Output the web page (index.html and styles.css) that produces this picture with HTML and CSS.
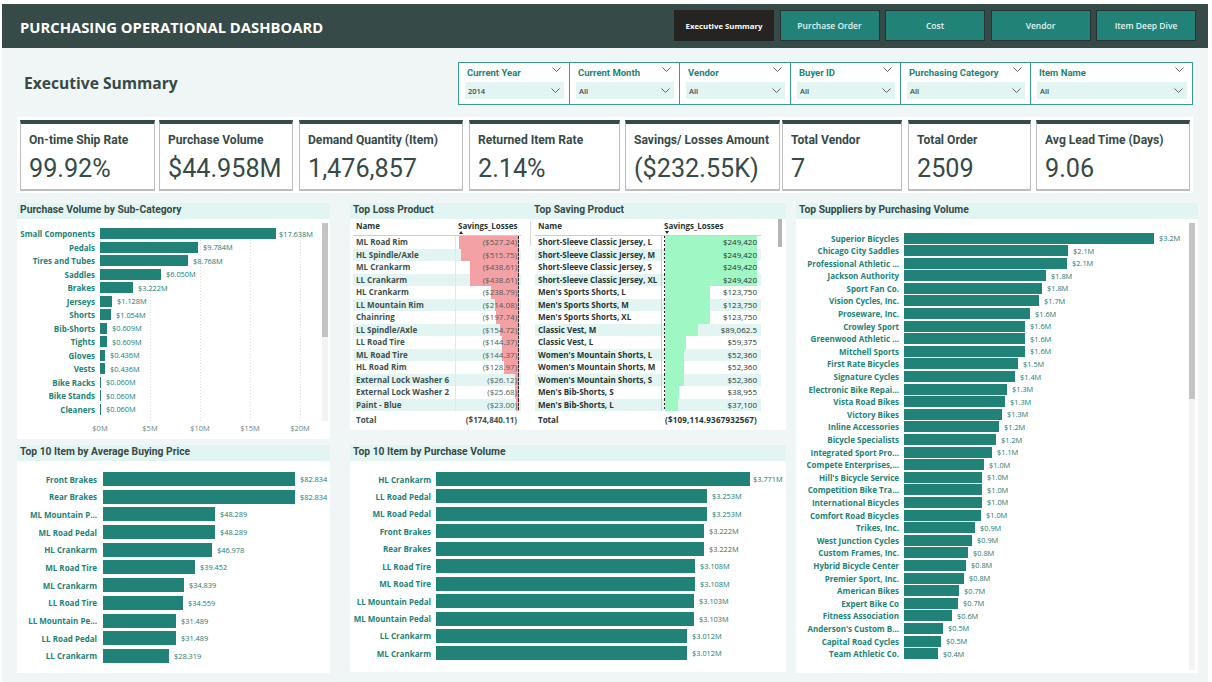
FILE: index.html
```html
<!DOCTYPE html>
<html lang="en">
<head>
    <meta charset="UTF-8">
    <title>Purchasing Operational Dashboard</title>
    <link rel="stylesheet" href="styles.css">
</head>
<body>
    <svg width="0" height="0" class="defs">
        <symbol id="chev" viewBox="0 0 9 5"><path d="M.5.5l4 4 4-4" fill="none" stroke="#4a5654" stroke-width=".9"/></symbol>
    </svg>
    <div class="report">
        <header class="topbar">
            <h1>PURCHASING OPERATIONAL DASHBOARD</h1>
            <nav class="tabs">
                <a class="tab active">Executive Summary</a>
                <a class="tab">Purchase Order</a>
                <a class="tab">Cost</a>
                <a class="tab">Vendor</a>
                <a class="tab">Item Deep Dive</a>
            </nav>
        </header>

        <!-- Slicers -->
        <section class="toolbar">
            <h2>Executive Summary</h2>
            <div class="slicers">
                <div class="slicer w-year">
                    <div class="slicer-head"><span>Current Year</span><svg class="chev"><use href="#chev"/></svg></div>
                    <div class="slicer-box"><span>2014</span><svg class="chev"><use href="#chev"/></svg></div>
                </div>
                <div class="slicer w-month">
                    <div class="slicer-head"><span>Current Month</span><svg class="chev"><use href="#chev"/></svg></div>
                    <div class="slicer-box"><span>All</span><svg class="chev"><use href="#chev"/></svg></div>
                </div>
                <div class="slicer w-vendor">
                    <div class="slicer-head"><span>Vendor</span><svg class="chev"><use href="#chev"/></svg></div>
                    <div class="slicer-box"><span>All</span><svg class="chev"><use href="#chev"/></svg></div>
                </div>
                <div class="slicer w-buyer">
                    <div class="slicer-head"><span>Buyer ID</span><svg class="chev"><use href="#chev"/></svg></div>
                    <div class="slicer-box"><span>All</span><svg class="chev"><use href="#chev"/></svg></div>
                </div>
                <div class="slicer w-cat">
                    <div class="slicer-head"><span>Purchasing Category</span><svg class="chev"><use href="#chev"/></svg></div>
                    <div class="slicer-box"><span>All</span><svg class="chev"><use href="#chev"/></svg></div>
                </div>
                <div class="slicer w-item">
                    <div class="slicer-head"><span>Item Name</span><svg class="chev"><use href="#chev"/></svg></div>
                    <div class="slicer-box"><span>All</span><svg class="chev"><use href="#chev"/></svg></div>
                </div>
            </div>
        </section>

        <!-- KPI cards -->
        <section class="kpis">
            <div class="kpi k1"><div class="kpi-title">On-time Ship Rate</div><div class="kpi-value">99.92%</div></div>
            <div class="kpi k2"><div class="kpi-title">Purchase Volume</div><div class="kpi-value">$44.958M</div></div>
            <div class="kpi k3"><div class="kpi-title">Demand Quantity (Item)</div><div class="kpi-value">1,476,857</div></div>
            <div class="kpi k4"><div class="kpi-title">Returned Item Rate</div><div class="kpi-value">2.14%</div></div>
            <div class="kpi k5"><div class="kpi-title">Savings/ Losses Amount</div><div class="kpi-value">($232.55K)</div></div>
            <div class="kpi k6"><div class="kpi-title">Total Vendor</div><div class="kpi-value">7</div></div>
            <div class="kpi k7"><div class="kpi-title">Total Order</div><div class="kpi-value">2509</div></div>
            <div class="kpi k8"><div class="kpi-title">Avg Lead Time (Days)</div><div class="kpi-value">9.06</div></div>
        </section>

        <main class="grid">
            <div class="col col-left">
                <section class="panel subcat">
                    <h3 class="band">Purchase Volume by Sub-Category</h3>
                    <div class="panel-body">
                        <div class="chart-wrap">
                            <div class="bars bars-sub">
                                <div class="row"><span class="lbl">Small Components</span><i class="bar" style="width:176px"></i><span class="val tight">$17.638M</span></div>
                                <div class="row"><span class="lbl">Pedals</span><i class="bar" style="width:98px"></i><span class="val">$9.784M</span></div>
                                <div class="row"><span class="lbl">Tires and Tubes</span><i class="bar" style="width:88px"></i><span class="val">$8.768M</span></div>
                                <div class="row"><span class="lbl">Saddles</span><i class="bar" style="width:61px"></i><span class="val">$6.050M</span></div>
                                <div class="row"><span class="lbl">Brakes</span><i class="bar" style="width:33px"></i><span class="val">$3.222M</span></div>
                                <div class="row"><span class="lbl">Jerseys</span><i class="bar" style="width:12px"></i><span class="val">$1.128M</span></div>
                                <div class="row"><span class="lbl">Shorts</span><i class="bar" style="width:11px"></i><span class="val">$1.054M</span></div>
                                <div class="row"><span class="lbl">Bib-Shorts</span><i class="bar" style="width:7px"></i><span class="val">$0.609M</span></div>
                                <div class="row"><span class="lbl">Tights</span><i class="bar" style="width:7px"></i><span class="val">$0.609M</span></div>
                                <div class="row"><span class="lbl">Gloves</span><i class="bar" style="width:5px"></i><span class="val">$0.436M</span></div>
                                <div class="row"><span class="lbl">Vests</span><i class="bar" style="width:5px"></i><span class="val">$0.436M</span></div>
                                <div class="row"><span class="lbl">Bike Racks</span><i class="bar" style="width:1px"></i><span class="val">$0.060M</span></div>
                                <div class="row"><span class="lbl">Bike Stands</span><i class="bar" style="width:1px"></i><span class="val">$0.060M</span></div>
                                <div class="row"><span class="lbl">Cleaners</span><i class="bar" style="width:1px"></i><span class="val">$0.060M</span></div>
                            </div>
                            <div class="axis">
                                <span>$0M</span><span>$5M</span><span>$10M</span><span>$15M</span><span>$20M</span>
                            </div>
                        </div>
                        <div class="scrollbar sb-sub"><div class="thumb"></div></div>
                    </div>
                </section>
                <section class="panel avgprice">
                    <h3 class="band">Top 10 Item by Average Buying Price</h3>
                    <div class="bars bars-price">
                        <div class="row"><span class="lbl">Front Brakes</span><i class="bar" style="width:192px"></i><span class="val">$82.834</span></div>
                        <div class="row"><span class="lbl">Rear Brakes</span><i class="bar" style="width:192px"></i><span class="val">$82.834</span></div>
                        <div class="row"><span class="lbl">ML Mountain P...</span><i class="bar" style="width:112px"></i><span class="val">$48.289</span></div>
                        <div class="row"><span class="lbl">ML Road Pedal</span><i class="bar" style="width:112px"></i><span class="val">$48.289</span></div>
                        <div class="row"><span class="lbl">HL Crankarm</span><i class="bar" style="width:109px"></i><span class="val">$46.978</span></div>
                        <div class="row"><span class="lbl">ML Road Tire</span><i class="bar" style="width:92px"></i><span class="val">$39.452</span></div>
                        <div class="row"><span class="lbl">ML Crankarm</span><i class="bar" style="width:81px"></i><span class="val">$34.839</span></div>
                        <div class="row"><span class="lbl">LL Road Tire</span><i class="bar" style="width:80px"></i><span class="val">$34.559</span></div>
                        <div class="row"><span class="lbl">LL Mountain Pe...</span><i class="bar" style="width:73px"></i><span class="val">$31.489</span></div>
                        <div class="row"><span class="lbl">LL Road Pedal</span><i class="bar" style="width:73px"></i><span class="val">$31.489</span></div>
                        <div class="row"><span class="lbl">LL Crankarm</span><i class="bar" style="width:66px"></i><span class="val">$28.319</span></div>
                    </div>
                </section>
            </div>

            <div class="col col-mid">
                <section class="panel tables">
                    <div class="band band-split"><h3>Top Loss Product</h3><h3>Top Saving Product</h3></div>
                    <div class="tables-body">
                        <div class="tbl tbl-loss">
                            <div class="tbl-head"><span>Name</span><span class="sort">Savings_Losses<b class="tri up"></b></span></div>
                            <div class="tbl-row"><span>ML Road Rim</span><span class="num" style="--w:60px">($527.24)</span></div>
                            <div class="tbl-row"><span>HL Spindle/Axle</span><span class="num" style="--w:58px">($515.75)</span></div>
                            <div class="tbl-row"><span>ML Crankarm</span><span class="num" style="--w:49px">($438.61)</span></div>
                            <div class="tbl-row"><span>LL Crankarm</span><span class="num" style="--w:49px">($438.61)</span></div>
                            <div class="tbl-row"><span>HL Crankarm</span><span class="num" style="--w:28px">($238.79)</span></div>
                            <div class="tbl-row"><span>LL Mountain Rim</span><span class="num" style="--w:24px">($214.08)</span></div>
                            <div class="tbl-row"><span>Chainring</span><span class="num" style="--w:23px">($197.74)</span></div>
                            <div class="tbl-row"><span>LL Spindle/Axle</span><span class="num" style="--w:19px">($154.72)</span></div>
                            <div class="tbl-row"><span>LL Road Tire</span><span class="num" style="--w:17px">($144.37)</span></div>
                            <div class="tbl-row"><span>ML Road Tire</span><span class="num" style="--w:17px">($144.37)</span></div>
                            <div class="tbl-row"><span>HL Road Rim</span><span class="num" style="--w:15px">($128.97)</span></div>
                            <div class="tbl-row"><span>External Lock Washer 6</span><span class="num" style="--w:4px">($26.12)</span></div>
                            <div class="tbl-row"><span>External Lock Washer 2</span><span class="num" style="--w:4px">($25.68)</span></div>
                            <div class="tbl-row"><span>Paint - Blue</span><span class="num" style="--w:3px">($23.00)</span></div>
                            <div class="tbl-total"><span>Total</span><span>($174,840.11)</span></div>
                        </div>
                        <div class="scrollbar sb-loss"></div>
                        <div class="tbl tbl-save">
                            <div class="tbl-head"><span>Name</span><span class="sort">Savings_Losses<b class="tri down"></b></span></div>
                            <div class="tbl-row"><span>Short-Sleeve Classic Jersey, L</span><span class="num" style="--w:92px">$249,420</span></div>
                            <div class="tbl-row"><span>Short-Sleeve Classic Jersey, M</span><span class="num" style="--w:92px">$249,420</span></div>
                            <div class="tbl-row"><span>Short-Sleeve Classic Jersey, S</span><span class="num" style="--w:92px">$249,420</span></div>
                            <div class="tbl-row"><span>Short-Sleeve Classic Jersey, XL</span><span class="num" style="--w:92px">$249,420</span></div>
                            <div class="tbl-row"><span>Men's Sports Shorts, L</span><span class="num" style="--w:45px">$123,750</span></div>
                            <div class="tbl-row"><span>Men's Sports Shorts, M</span><span class="num" style="--w:45px">$123,750</span></div>
                            <div class="tbl-row"><span>Men's Sports Shorts, XL</span><span class="num" style="--w:45px">$123,750</span></div>
                            <div class="tbl-row"><span>Classic Vest, M</span><span class="num" style="--w:33px">$89,062.5</span></div>
                            <div class="tbl-row"><span>Classic Vest, L</span><span class="num" style="--w:21px">$59,375</span></div>
                            <div class="tbl-row"><span>Women's Mountain Shorts, L</span><span class="num" style="--w:19px">$52,360</span></div>
                            <div class="tbl-row"><span>Women's Mountain Shorts, M</span><span class="num" style="--w:19px">$52,360</span></div>
                            <div class="tbl-row"><span>Women's Mountain Shorts, S</span><span class="num" style="--w:19px">$52,360</span></div>
                            <div class="tbl-row"><span>Men's Bib-Shorts, S</span><span class="num" style="--w:14px">$38,955</span></div>
                            <div class="tbl-row"><span>Men's Bib-Shorts, L</span><span class="num" style="--w:13px">$37,100</span></div>
                            <div class="tbl-total"><span>Total</span><span>($109,114.9367932567)</span></div>
                        </div>
                        <div class="scrollbar sb-save"></div>
                    </div>
                </section>
                <section class="panel topvolume">
                    <h3 class="band">Top 10 Item by Purchase Volume</h3>
                    <div class="bars bars-volume">
                        <div class="row"><span class="lbl">HL Crankarm</span><i class="bar" style="width:314px"></i><span class="val tight">$3.771M</span></div>
                        <div class="row"><span class="lbl">LL Road Pedal</span><i class="bar" style="width:271px"></i><span class="val">$3.253M</span></div>
                        <div class="row"><span class="lbl">ML Road Pedal</span><i class="bar" style="width:271px"></i><span class="val">$3.253M</span></div>
                        <div class="row"><span class="lbl">Front Brakes</span><i class="bar" style="width:268px"></i><span class="val">$3.222M</span></div>
                        <div class="row"><span class="lbl">Rear Brakes</span><i class="bar" style="width:268px"></i><span class="val">$3.222M</span></div>
                        <div class="row"><span class="lbl">LL Road Tire</span><i class="bar" style="width:259px"></i><span class="val">$3.108M</span></div>
                        <div class="row"><span class="lbl">ML Road Tire</span><i class="bar" style="width:259px"></i><span class="val">$3.108M</span></div>
                        <div class="row"><span class="lbl">LL Mountain Pedal</span><i class="bar" style="width:258px"></i><span class="val">$3.103M</span></div>
                        <div class="row"><span class="lbl">ML Mountain Pedal</span><i class="bar" style="width:258px"></i><span class="val">$3.103M</span></div>
                        <div class="row"><span class="lbl">LL Crankarm</span><i class="bar" style="width:251px"></i><span class="val">$3.012M</span></div>
                        <div class="row"><span class="lbl">ML Crankarm</span><i class="bar" style="width:251px"></i><span class="val">$3.012M</span></div>
                    </div>
                </section>
            </div>

            <div class="col col-right">
                <section class="panel suppliers">
                    <h3 class="band">Top Suppliers by Purchasing Volume</h3>
                    <div class="panel-body">
                        <div class="bars bars-supplier">
                            <div class="row"><span class="lbl">Superior Bicycles</span><i class="bar" style="width:250px"></i><span class="val">$3.2M</span></div>
                            <div class="row"><span class="lbl">Chicago City Saddles</span><i class="bar" style="width:164px"></i><span class="val">$2.1M</span></div>
                            <div class="row"><span class="lbl">Professional Athletic ...</span><i class="bar" style="width:163px"></i><span class="val">$2.1M</span></div>
                            <div class="row"><span class="lbl">Jackson Authority</span><i class="bar" style="width:142px"></i><span class="val">$1.8M</span></div>
                            <div class="row"><span class="lbl">Sport Fan Co.</span><i class="bar" style="width:138px"></i><span class="val">$1.8M</span></div>
                            <div class="row"><span class="lbl">Vision Cycles, Inc.</span><i class="bar" style="width:135px"></i><span class="val">$1.7M</span></div>
                            <div class="row"><span class="lbl">Proseware, Inc.</span><i class="bar" style="width:126px"></i><span class="val">$1.6M</span></div>
                            <div class="row"><span class="lbl">Crowley Sport</span><i class="bar" style="width:121px"></i><span class="val">$1.6M</span></div>
                            <div class="row"><span class="lbl">Greenwood Athletic ...</span><i class="bar" style="width:121px"></i><span class="val">$1.6M</span></div>
                            <div class="row"><span class="lbl">Mitchell Sports</span><i class="bar" style="width:121px"></i><span class="val">$1.6M</span></div>
                            <div class="row"><span class="lbl">First Rate Bicycles</span><i class="bar" style="width:114px"></i><span class="val">$1.5M</span></div>
                            <div class="row"><span class="lbl">Signature Cycles</span><i class="bar" style="width:111px"></i><span class="val">$1.4M</span></div>
                            <div class="row"><span class="lbl">Electronic Bike Repai...</span><i class="bar" style="width:103px"></i><span class="val">$1.3M</span></div>
                            <div class="row"><span class="lbl">Vista Road Bikes</span><i class="bar" style="width:101px"></i><span class="val">$1.3M</span></div>
                            <div class="row"><span class="lbl">Victory Bikes</span><i class="bar" style="width:98px"></i><span class="val">$1.3M</span></div>
                            <div class="row"><span class="lbl">Inline Accessories</span><i class="bar" style="width:95px"></i><span class="val">$1.2M</span></div>
                            <div class="row"><span class="lbl">Bicycle Specialists</span><i class="bar" style="width:92px"></i><span class="val">$1.2M</span></div>
                            <div class="row"><span class="lbl">Integrated Sport Pro...</span><i class="bar" style="width:88px"></i><span class="val">$1.1M</span></div>
                            <div class="row"><span class="lbl">Compete Enterprises,...</span><i class="bar" style="width:80px"></i><span class="val">$1.0M</span></div>
                            <div class="row"><span class="lbl">Hill's Bicycle Service</span><i class="bar" style="width:78px"></i><span class="val">$1.0M</span></div>
                            <div class="row"><span class="lbl">Competition Bike Tra...</span><i class="bar" style="width:78px"></i><span class="val">$1.0M</span></div>
                            <div class="row"><span class="lbl">International Bicycles</span><i class="bar" style="width:78px"></i><span class="val">$1.0M</span></div>
                            <div class="row"><span class="lbl">Comfort Road Bicycles</span><i class="bar" style="width:77px"></i><span class="val">$1.0M</span></div>
                            <div class="row"><span class="lbl">Trikes, Inc.</span><i class="bar" style="width:71px"></i><span class="val">$0.9M</span></div>
                            <div class="row"><span class="lbl">West Junction Cycles</span><i class="bar" style="width:68px"></i><span class="val">$0.9M</span></div>
                            <div class="row"><span class="lbl">Custom Frames, Inc.</span><i class="bar" style="width:64px"></i><span class="val">$0.8M</span></div>
                            <div class="row"><span class="lbl">Hybrid Bicycle Center</span><i class="bar" style="width:62px"></i><span class="val">$0.8M</span></div>
                            <div class="row"><span class="lbl">Premier Sport, Inc.</span><i class="bar" style="width:60px"></i><span class="val">$0.8M</span></div>
                            <div class="row"><span class="lbl">American Bikes</span><i class="bar" style="width:55px"></i><span class="val">$0.7M</span></div>
                            <div class="row"><span class="lbl">Expert Bike Co</span><i class="bar" style="width:54px"></i><span class="val">$0.7M</span></div>
                            <div class="row"><span class="lbl">Fitness Association</span><i class="bar" style="width:48px"></i><span class="val">$0.6M</span></div>
                            <div class="row"><span class="lbl">Anderson's Custom B...</span><i class="bar" style="width:39px"></i><span class="val">$0.5M</span></div>
                            <div class="row"><span class="lbl">Capital Road Cycles</span><i class="bar" style="width:37px"></i><span class="val">$0.5M</span></div>
                            <div class="row"><span class="lbl">Team Athletic Co.</span><i class="bar" style="width:34px"></i><span class="val">$0.4M</span></div>
                        </div>
                        <div class="scrollbar sb-supplier"><div class="thumb"></div></div>
                    </div>
                </section>
            </div>
        </main>
    </div>
</body>
</html>
```

FILE: styles.css
```css
* {
    box-sizing: border-box;
}

body {
    margin: 0;
    background-color: white;
    font-family: "Open Sans", sans-serif;
    color: #364a47;
    overflow: hidden;
}

.defs {
    position: absolute;
}

.report {
    width: 1206px;
    height: 678px;
    margin: 4px 0 0 2px;
    background-color: #eff6f5;
}

/* Top bar */
.topbar {
    height: 44px;
    background-color: #364a47;
    display: flex;
    justify-content: space-between;
    padding: 6px 12px 0 18px;
}

.topbar h1 {
    margin: 8px 0 0;
    color: white;
    font-size: 14.8px;
    font-weight: 700;
    line-height: 18px;
}

.tabs {
    display: flex;
    gap: 5.5px;
    height: 31px;
}

.tab {
    width: 100px;
    background-color: #218377;
    border: 1px solid #263533;
    color: #e4f2f0;
    font-size: 8.5px;
    font-weight: 600;
    display: flex;
    align-items: center;
    justify-content: center;
}

.tab.active {
    background-color: #252423;
    border-color: #252423;
    color: white;
    font-size: 7.8px;
    font-weight: 700;
}

/* Slicers */
.toolbar {
    height: 69px;
    padding: 14px 0 0 22px;
    display: flex;
    justify-content: space-between;
}

.toolbar h2 {
    margin: 10px 0 0;
    font-size: 15.6px;
    font-weight: 700;
    line-height: 22px;
}

.slicers {
    display: flex;
    height: 43px;
    margin-right: 15px;
}

.slicer {
    background-color: white;
    border: 1px solid #3a9a8d;
    border-right-width: 0;
    padding: 0 5px 0 6px;
}

.slicer:last-child {
    border-right-width: 1px;
}

.w-year { width: 111px; }
.w-month { width: 110px; }
.w-vendor { width: 111px; }
.w-buyer { width: 110px; }
.w-cat { width: 130px; }
.w-item { width: 163px; }

.slicer-head {
    height: 19px;
    display: flex;
    justify-content: space-between;
    align-items: center;
    padding: 0 2px;
    color: #218377;
    font-family: Roboto, sans-serif;
    font-size: 9.5px;
    font-weight: 700;
}

.chev {
    width: 9px;
    height: 5px;
    flex: none;
    margin-right: 1px;
}

.slicer-head .chev {
    margin-top: -6px;
}

.slicer-box {
    height: 17px;
    background-color: #e3f5f2;
    display: flex;
    justify-content: space-between;
    align-items: center;
    padding: 0 3px 0 3px;
    font-size: 7.5px;
    font-weight: 600;
    color: #3f4a48;
}

/* KPI cards */
.kpis {
    height: 76px;
    margin-left: 15px;
    width: 1176px;
    background-color: white;
    padding: 3px 3px 2px 3px;
    display: flex;
}

.kpi {
    height: 71px;
    background-color: white;
    border: 1px solid #bdbdbd;
    border-top: 4px solid #364a47;
    border-bottom-width: 2px;
    padding: 8px 0 0 8px;
}

.k1 { width: 135px; margin-right: 4px; }
.k2 { width: 134px; margin-right: 6px; }
.k3 { width: 164px; margin-right: 6px; }
.k4 { width: 151px; margin-right: 5px; }
.k5 { width: 155px; margin-right: 2px; }
.k6 { width: 120px; margin-right: 6px; }
.k7 { width: 123px; margin-right: 5px; }
.k8 { width: 154px; }

.kpi-title {
    font-family: Roboto, sans-serif;
    font-size: 12.1px;
    font-weight: 700;
    line-height: 16px;
    white-space: nowrap;
}

.kpi-value {
    font-family: Roboto, sans-serif;
    font-size: 25.2px;
    line-height: 30px;
    margin-top: 6px;
    white-space: nowrap;
}

/* Panels */
.grid {
    display: flex;
    margin-top: 10px;
    padding-left: 15px;
}

.col {
    display: flex;
    flex-direction: column;
}

.col-left {
    width: 313px;
    margin-right: 20px;
    gap: 6px;
}

.col-mid {
    width: 436px;
    margin-right: 10px;
    gap: 15px;
}

.col-right {
    width: 402px;
}

.panel {
    background-color: white;
}

.band {
    margin: 0;
    height: 16px;
    background-color: #e3f5f2;
    padding-left: 3px;
    font-family: Roboto, sans-serif;
    font-size: 10.3px;
    font-weight: 700;
    line-height: 14px;
}

.band-split {
    display: flex;
}

.band-split h3 {
    margin: 0;
    font: inherit;
}

.band-split h3:first-child {
    width: 181px;
}

.subcat { height: 236px; }
.avgprice { height: 228px; }
.tables { height: 227px; }
.topvolume { height: 227px; }
.suppliers { height: 470px; }

.panel-body {
    display: flex;
    position: relative;
}

/* Bar charts */
.bars {
    display: grid;
}

.row {
    display: flex;
    align-items: center;
    min-width: 0;
}

.lbl {
    flex: none;
    text-align: right;
    color: #218377;
    font-size: 8px;
    font-weight: 700;
    white-space: nowrap;
}

.bar {
    display: block;
    height: 100%;
    flex: none;
    background-color: #218377;
}

.val {
    margin-left: 5px;
    color: #217a6f;
    font-size: 7.4px;
    white-space: nowrap;
}

.val.tight {
    margin-left: 3px;
}

.chart-wrap {
    width: 305px;
    padding-top: 9px;
}

.bars-sub {
    grid-auto-rows: 11px;
    row-gap: 2.54px;
    padding-bottom: 6px;
    margin-left: 83px;
    background-image: conic-gradient(at 1px 1px, transparent 75%, #dedede 0);
    background-size: 50px 3px;
    height: 193px;
}

.bars-sub .lbl {
    width: 78px;
    margin-left: -83px;
    margin-right: 5px;
}

.axis {
    display: flex;
    margin-left: 58px;
    height: 14px;
    align-items: center;
    color: #6f7f7c;
    font-size: 7.5px;
}

.axis span {
    flex: none;
    width: 50px;
    text-align: center;
}

.scrollbar {
    background-color: #f3f3f3;
}

.thumb {
    background-color: #c4c4c4;
}

.sb-sub {
    width: 6px;
    height: 198px;
    margin: 4px 0 0 0;
}

.sb-sub .thumb {
    height: 114px;
}

.bars-price {
    padding-top: 11px;
    grid-auto-rows: 14px;
    row-gap: 3.7px;
}

.bars-price .lbl {
    width: 80px;
    margin-right: 6px;
}

.bars-volume {
    padding-top: 11px;
    grid-auto-rows: 14px;
    row-gap: 3.45px;
}

.bars-volume .lbl {
    width: 81px;
    margin-right: 5px;
}

.bars-supplier {
    width: 393px;
    padding-top: 13.5px;
    grid-auto-rows: 11px;
    row-gap: 1.6px;
}

.bars-supplier .lbl {
    width: 103px;
    margin-right: 5px;
}

.sb-supplier {
    width: 6px;
    height: 447px;
    margin-top: 4px;
}

.sb-supplier .thumb {
    height: 176px;
}

/* Tables */
.tables-body {
    display: flex;
    align-items: flex-start;
    padding-left: 3px;
}

.tbl {
    font-size: 8px;
    font-weight: 700;
    color: #3d504d;
}

.tbl-loss {
    width: 168px;
}

.tbl-save {
    width: 226px;
    color: #263533;
}

.tbl-head {
    display: grid;
    height: 17px;
    align-items: start;
    padding-top: 2px;
    border-bottom: 1px solid #b3d4f0;
    line-height: 10px;
    color: #263533;
}

.tbl-loss .tbl-head,
.tbl-loss .tbl-row,
.tbl-loss .tbl-total {
    grid-template-columns: 102px 66px;
}

.tbl-save .tbl-head,
.tbl-save .tbl-row,
.tbl-save .tbl-total {
    grid-template-columns: 126px 100px;
}

.tbl-head span:first-child,
.tbl-row span:first-child,
.tbl-total span:first-child {
    padding-left: 3px;
}

.sort {
    padding-left: 3px;
    display: block;
    position: relative;
}

.tri {
    position: absolute;
    left: 4px;
    top: 10px;
    border-left: 2.5px solid transparent;
    border-right: 2.5px solid transparent;
}

.tri.up {
    border-bottom: 3px solid #252423;
}

.tri.down {
    border-top: 3px solid #252423;
}

.tbl-row {
    display: grid;
    height: 12.5px;
    line-height: 12.5px;
    white-space: nowrap;
}

.tbl-row:nth-child(odd) {
    background-color: #e3f5f2;
}

.num {
    font-weight: 400;
    text-align: right;
    background-repeat: no-repeat;
}

.tbl-loss .num {
    padding-right: 4px;
    border-left: 1px solid #dbe9f6;
    color: #4d5f5c;
    background-image: repeating-linear-gradient(#252423 0 3px, transparent 3px 4px), linear-gradient(#f4a1a5, #f4a1a5);
    background-size: 1px 100%, var(--w) 100%;
    background-position: right 2px top, right 2px top;
}

.tbl-save .num {
    padding-right: 4px;
    border-left: 1px solid #b3d4f0;
    background-image: repeating-linear-gradient(#252423 0 2px, transparent 2px 4px), linear-gradient(#9ff7c4, #9ff7c4);
    background-size: 1px 100%, var(--w) 100%;
    background-position: 2px top, 3px top;
}

.tbl-total {
    display: grid;
    height: 19px;
    line-height: 18px;
    white-space: nowrap;
}

.tbl-total span:last-child {
    text-align: right;
    padding-right: 4px;
}

.tbl-save .tbl-total span:last-child {
    letter-spacing: .2px;
}

.sb-loss {
    width: 1px;
    height: 25px;
    margin: 2px 4px 0 9px;
    background-color: #d9d9d9;
}

.sb-save {
    width: 4px;
    height: 28px;
    margin-left: 17px;
    background-color: #b5b5b5;
}
```
